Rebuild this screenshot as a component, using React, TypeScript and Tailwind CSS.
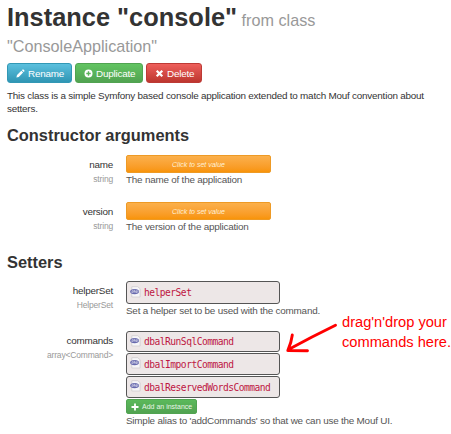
import type { ReactNode } from 'react';

function PhpIcon() {
  return (
    <svg width="11" height="12" viewBox="0 0 11 12" className="mr-[3px] mb-[2px] shrink-0">
      <path d="M1.8 .7h5.900l2.400 2.100v8.200H1.800z" fill="#f7f6f8" stroke="#cbc8cc" strokeWidth=".7" />
      <ellipse cx="4.600" cy="5.600" rx="4.400" ry="2.700" fill="#6769ad" />
      <path d="M2 7.100V4.700h1q.8 0 .8.8t-.8.8h-.8M4.400 3.800v2.800M4.500 4.900h.7q.5 0 .5.500v1.200M6.300 7.100V4.700h.8q.8 0 .8.8t-.8.8h-.6" fill="none" stroke="#e5e5f4" strokeWidth=".6" />
    </svg>
  );
}

function Instance({ name, className }: { name: string; className: string }) {
  return (
    <div className={`flex w-[154px] items-center rounded-[3px] border border-[#555] bg-[#ede7e7] pl-[3px] font-['DejaVu_Sans_Mono',monospace] text-[9.6px] tracking-[-0.51px] text-[#bd1642] ${className}`}>
      <PhpIcon />
      <span>{name}</span>
    </div>
  );
}

function Field({ label, type, className, children }: { label: string; type: string; className: string; children: ReactNode }) {
  return (
    <div className={`flex ${className}`}>
      <div className="mr-[13px] w-[106px] pt-[3px] text-right leading-[14px] text-[#333]">
        <div>{label}</div>
        <div className="text-[8.5px] tracking-[-0.18px] text-[#999]">{type}</div>
      </div>
      <div className="whitespace-nowrap text-[#555]">{children}</div>
    </div>
  );
}

function ValueButton() {
  return (
    <button className="flex h-[18px] w-[145px] items-center justify-center rounded-[2px] border border-[#ee9a25] bg-linear-to-b from-[#fbb04b] to-[#f89406] text-[7px] tracking-normal text-[#fff0d7] italic">
      Click to set value
    </button>
  );
}

export default function App() {
  return (
    <div className="relative h-[434px] w-[451px] overflow-hidden bg-white pl-[7px] font-['Liberation_Sans',Arial,sans-serif] text-[9.9px] leading-[13px] tracking-[-0.215px] text-[#333]">
      <h1 className="h-[63px] pt-[4px] text-[25.4px] leading-[26px] font-bold tracking-normal whitespace-nowrap">
        Instance "console"<span className="text-[16.2px] leading-[16px] font-normal text-[#999]"> from class<br />"ConsoleApplication"</span>
      </h1>
      <div className="flex h-[20px] gap-[3px] text-white">
        <button className="flex w-[65px] items-center rounded-[3px] border border-[#3298b5] bg-linear-to-b from-[#5bc0de] to-[#2f96b4] pl-[8px]">
          <svg width="9" height="9" viewBox="0 0 9 9" className="mr-[3px]"><path d="M.4 8.5 1 6.1 5.3 1.8l1.8 1.8L2.8 7.9zM5.9 1.2l.7-.7q.4-.3.8 0l1 1q.3.4 0 .8l-.7.7z" fill="white" /></svg>
          Rename
        </button>
        <button className="flex w-[68px] items-center rounded-[3px] border border-[#51a351] bg-linear-to-b from-[#62c462] to-[#51a351] pl-[8px]">
          <svg width="9" height="9" viewBox="0 0 9 9" className="mr-[3px]"><circle cx="4.5" cy="4.5" r="4" fill="white" /><path d="M4.5 2.3v4.4M2.3 4.5h4.4" stroke="#59b359" strokeWidth="1.4" /></svg>
          Duplicate
        </button>
        <button className="flex w-[56px] items-center rounded-[3px] border border-[#bd3a35] bg-linear-to-b from-[#ee5f5b] to-[#bd362f] pl-[8px]">
          <svg width="9" height="9" viewBox="0 0 9 9" className="mr-[3px]"><path d="m1.7 1.7 5.6 5.6m0-5.6L1.7 7.3" stroke="white" strokeWidth="2.2" /></svg>
          Delete
        </button>
      </div>
      <p className="mt-[6px] h-[38px] whitespace-nowrap">
        This class is a simple Symfony based console application extended to match Mouf convention about<br />setters.
      </p>
      <h2 className="h-[28px] text-[16.4px] leading-[16px] font-bold tracking-normal">Constructor arguments</h2>
      <Field label="name" type="string" className="h-[47px]">
        <ValueButton />
        <p>The name of the application</p>
      </Field>
      <Field label="version" type="string" className="h-[52px]">
        <ValueButton />
        <p>The version of the application</p>
      </Field>
      <h2 className="h-[27px] text-[16.4px] leading-[16px] font-bold tracking-normal">Setters</h2>
      <Field label="helperSet" type="HelperSet" className="h-[50px]">
        <Instance name="helperSet" className="h-[23px]" />
        <p>Set a helper set to be used with the command.</p>
      </Field>
      <Field label="commands" type="array<Command>" className="h-[103px]">
        <Instance name="dbalRunSqlCommand" className="h-[21px]" />
        <Instance name="dbalImportCommand" className="mt-[1px] h-[22px]" />
        <Instance name="dbalReservedWordsCommand" className="mt-[1px] h-[22px]" />
        <button className="mt-[1px] flex h-[15px] w-[71px] items-center rounded-[2px] border border-[#51a351] bg-linear-to-b from-[#5bb95b] to-[#51a351] pl-[4px] text-[7px] tracking-normal text-[#e7f6e7]">
          <svg width="8" height="8" viewBox="0 0 8 8" className="mr-[3px]"><path d="M4 .5v7M.5 4h7" stroke="white" strokeWidth="1.8" /></svg>
          Add an instance
        </button>
        <p>Simple alias to 'addCommands' so that we can use the Mouf UI.</p>
      </Field>
      <div className="absolute top-[312px] left-[342px] text-[14.65px] leading-[20px] tracking-normal whitespace-nowrap text-[#f00]">
        drag'n'drop your<br />commands here.
      </div>
      <svg width="54" height="32" viewBox="0 0 54 32" className="absolute top-[321px] left-[284px]">
        <path d="M51.500 4.200L28 16L4.500 28.500M8.300 14Q7.500 21 3.800 29.500L23.500 29.800" fill="none" stroke="#f00" strokeWidth="2.900" strokeLinecap="round" strokeLinejoin="round" />
      </svg>
    </div>
  );
}
